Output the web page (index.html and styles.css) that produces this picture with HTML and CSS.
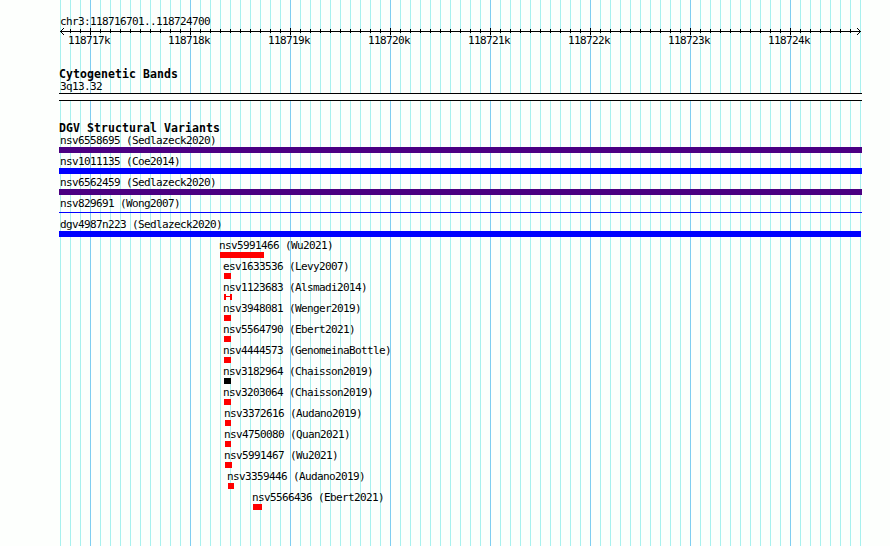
FILE: index.html
```
<!DOCTYPE html>
<html lang="en">
<head>
<meta charset="utf-8">
<title>chr3:118716701..118724700</title>
<link rel="stylesheet" href="styles.css">
</head>
<body>
<main class="browser">
  <header class="ruler">
    <p class="label region">chr3:118716701..118724700</p>
    <svg class="axis" width="803" height="9" viewBox="0 0 803 9" shape-rendering="crispEdges">
      <defs><pattern id="minor" x="1" width="10" height="9" patternUnits="userSpaceOnUse"><rect y="2" width="1" height="4"/></pattern>
      <pattern id="major" x="31" width="100" height="9" patternUnits="userSpaceOnUse"><rect y="1" width="1" height="7"/></pattern></defs>
      <rect x="1" y="4" width="801" height="1"/>
      <rect x="10" width="785" height="9" fill="url(#minor)"/>
      <rect x="10" width="785" height="9" fill="url(#major)"/>
      <path d="M2 3h1v1h-1zM3 2h1v1h-1zM4 1h1v1h-1zM2 5h1v1h-1zM3 6h1v1h-1zM4 7h1v1h-1z"/>
      <path d="M800 3h1v1h-1zM799 2h1v1h-1zM798 1h1v1h-1zM800 5h1v1h-1zM799 6h1v1h-1zM798 7h1v1h-1z"/>
    </svg>
    <div class="ticks label"><span>118717k</span><span>118718k</span><span>118719k</span><span>118720k</span><span>118721k</span><span>118722k</span><span>118723k</span><span>118724k</span></div>
  </header>
  <section class="bands">
    <h2>Cytogenetic Bands</h2>
    <p class="label">3q13.32</p>
    <div class="band"></div>
  </section>
  <section class="variants">
    <h2>DGV Structural Variants</h2>
    <div class="rows" id="rows"></div>
  </section>
</main>
<script src="script.js"></script>
</body>
</html>
```
FILE: styles.css
```
* { box-sizing: border-box; }
body { margin: 0; background: #fdfffd; color: #000; }
p, h2 { margin: 0; }
.browser {
  width: 803px;
  height: 546px;
  margin-left: 59px;
  padding-top: 15px;
  overflow: hidden;
  background:
    repeating-linear-gradient(90deg, transparent 0 31px, #7fcdf0 31px 32px, transparent 32px 100px),
    repeating-linear-gradient(90deg, transparent 0 1px, #a8f0ee 1px 2px, transparent 2px 10px);
}
.label {
  font: 11px/12px "DejaVu Sans Mono", monospace;
  letter-spacing: -0.622px;
  height: 12px;
  padding-left: 1px;
  white-space: pre;
}
.region { line-height: 14px; }
h2 {
  font: bold 11.5px/13px "DejaVu Sans Mono", monospace;
  letter-spacing: 0.077px;
  height: 13px;
  white-space: pre;
}
.ruler { height: 53px; }
.axis { display: block; }
.ticks {
  display: grid;
  grid-template-columns: repeat(8, 100px);
  padding-left: 9px;
  margin-top: -1px;
}
.bands { height: 54px; }
.band {
  height: 8px;
  border: solid #000;
  border-width: 1px 0;
  background: #fdfffd;
}
.row { height: 21px; }
.bar { height: 6px; }
.purple { background: #4b0082; }
.blue { background: #00f; }
.red { background: #f00; }
.black { background: #000; }
.row .line { height: 1px; position: relative; top: 2px; background: #00f; }
.bracket {
  border: solid #f00;
  border-width: 0 2px;
  background: linear-gradient(#f00, #f00) 0 2px / 100% 1px no-repeat;
}
```
FILE: script.js
```
const variants = [
  ["nsv6558695 (Sedlazeck2020)", 0, 803, "purple"],
  ["nsv1011135 (Coe2014)", 0, 803, "blue"],
  ["nsv6562459 (Sedlazeck2020)", 0, 803, "purple"],
  ["nsv829691 (Wong2007)", 0, 803, "line"],
  ["dgv4987n223 (Sedlazeck2020)", 0, 802, "blue"],
  ["nsv5991466 (Wu2021)", 161, 44, "red"],
  ["esv1633536 (Levy2007)", 165, 7, "red"],
  ["nsv1123683 (Alsmadi2014)", 165, 8, "bracket"],
  ["nsv3948081 (Wenger2019)", 165, 7, "red"],
  ["nsv5564790 (Ebert2021)", 165, 7, "red"],
  ["nsv4444573 (GenomeinaBottle)", 165, 7, "red"],
  ["nsv3182964 (Chaisson2019)", 165, 7, "black"],
  ["nsv3203064 (Chaisson2019)", 165, 7, "red"],
  ["nsv3372616 (Audano2019)", 166, 6, "red"],
  ["nsv4750080 (Quan2021)", 166, 6, "red"],
  ["nsv5991467 (Wu2021)", 166, 7, "red"],
  ["nsv3359446 (Audano2019)", 169, 6, "red"],
  ["nsv5566436 (Ebert2021)", 194, 9, "red"]
];
document.getElementById("rows").innerHTML = variants.map(([name, start, width, kind]) =>
  `<div class="row" style="padding-left:${start}px">
    <p class="label"${start ? ' style="padding-left:0;margin-left:-1px"' : ""}>${name}</p>
    <div class="bar ${kind}" style="width:${width}px"></div>
  </div>`).join("");
```
